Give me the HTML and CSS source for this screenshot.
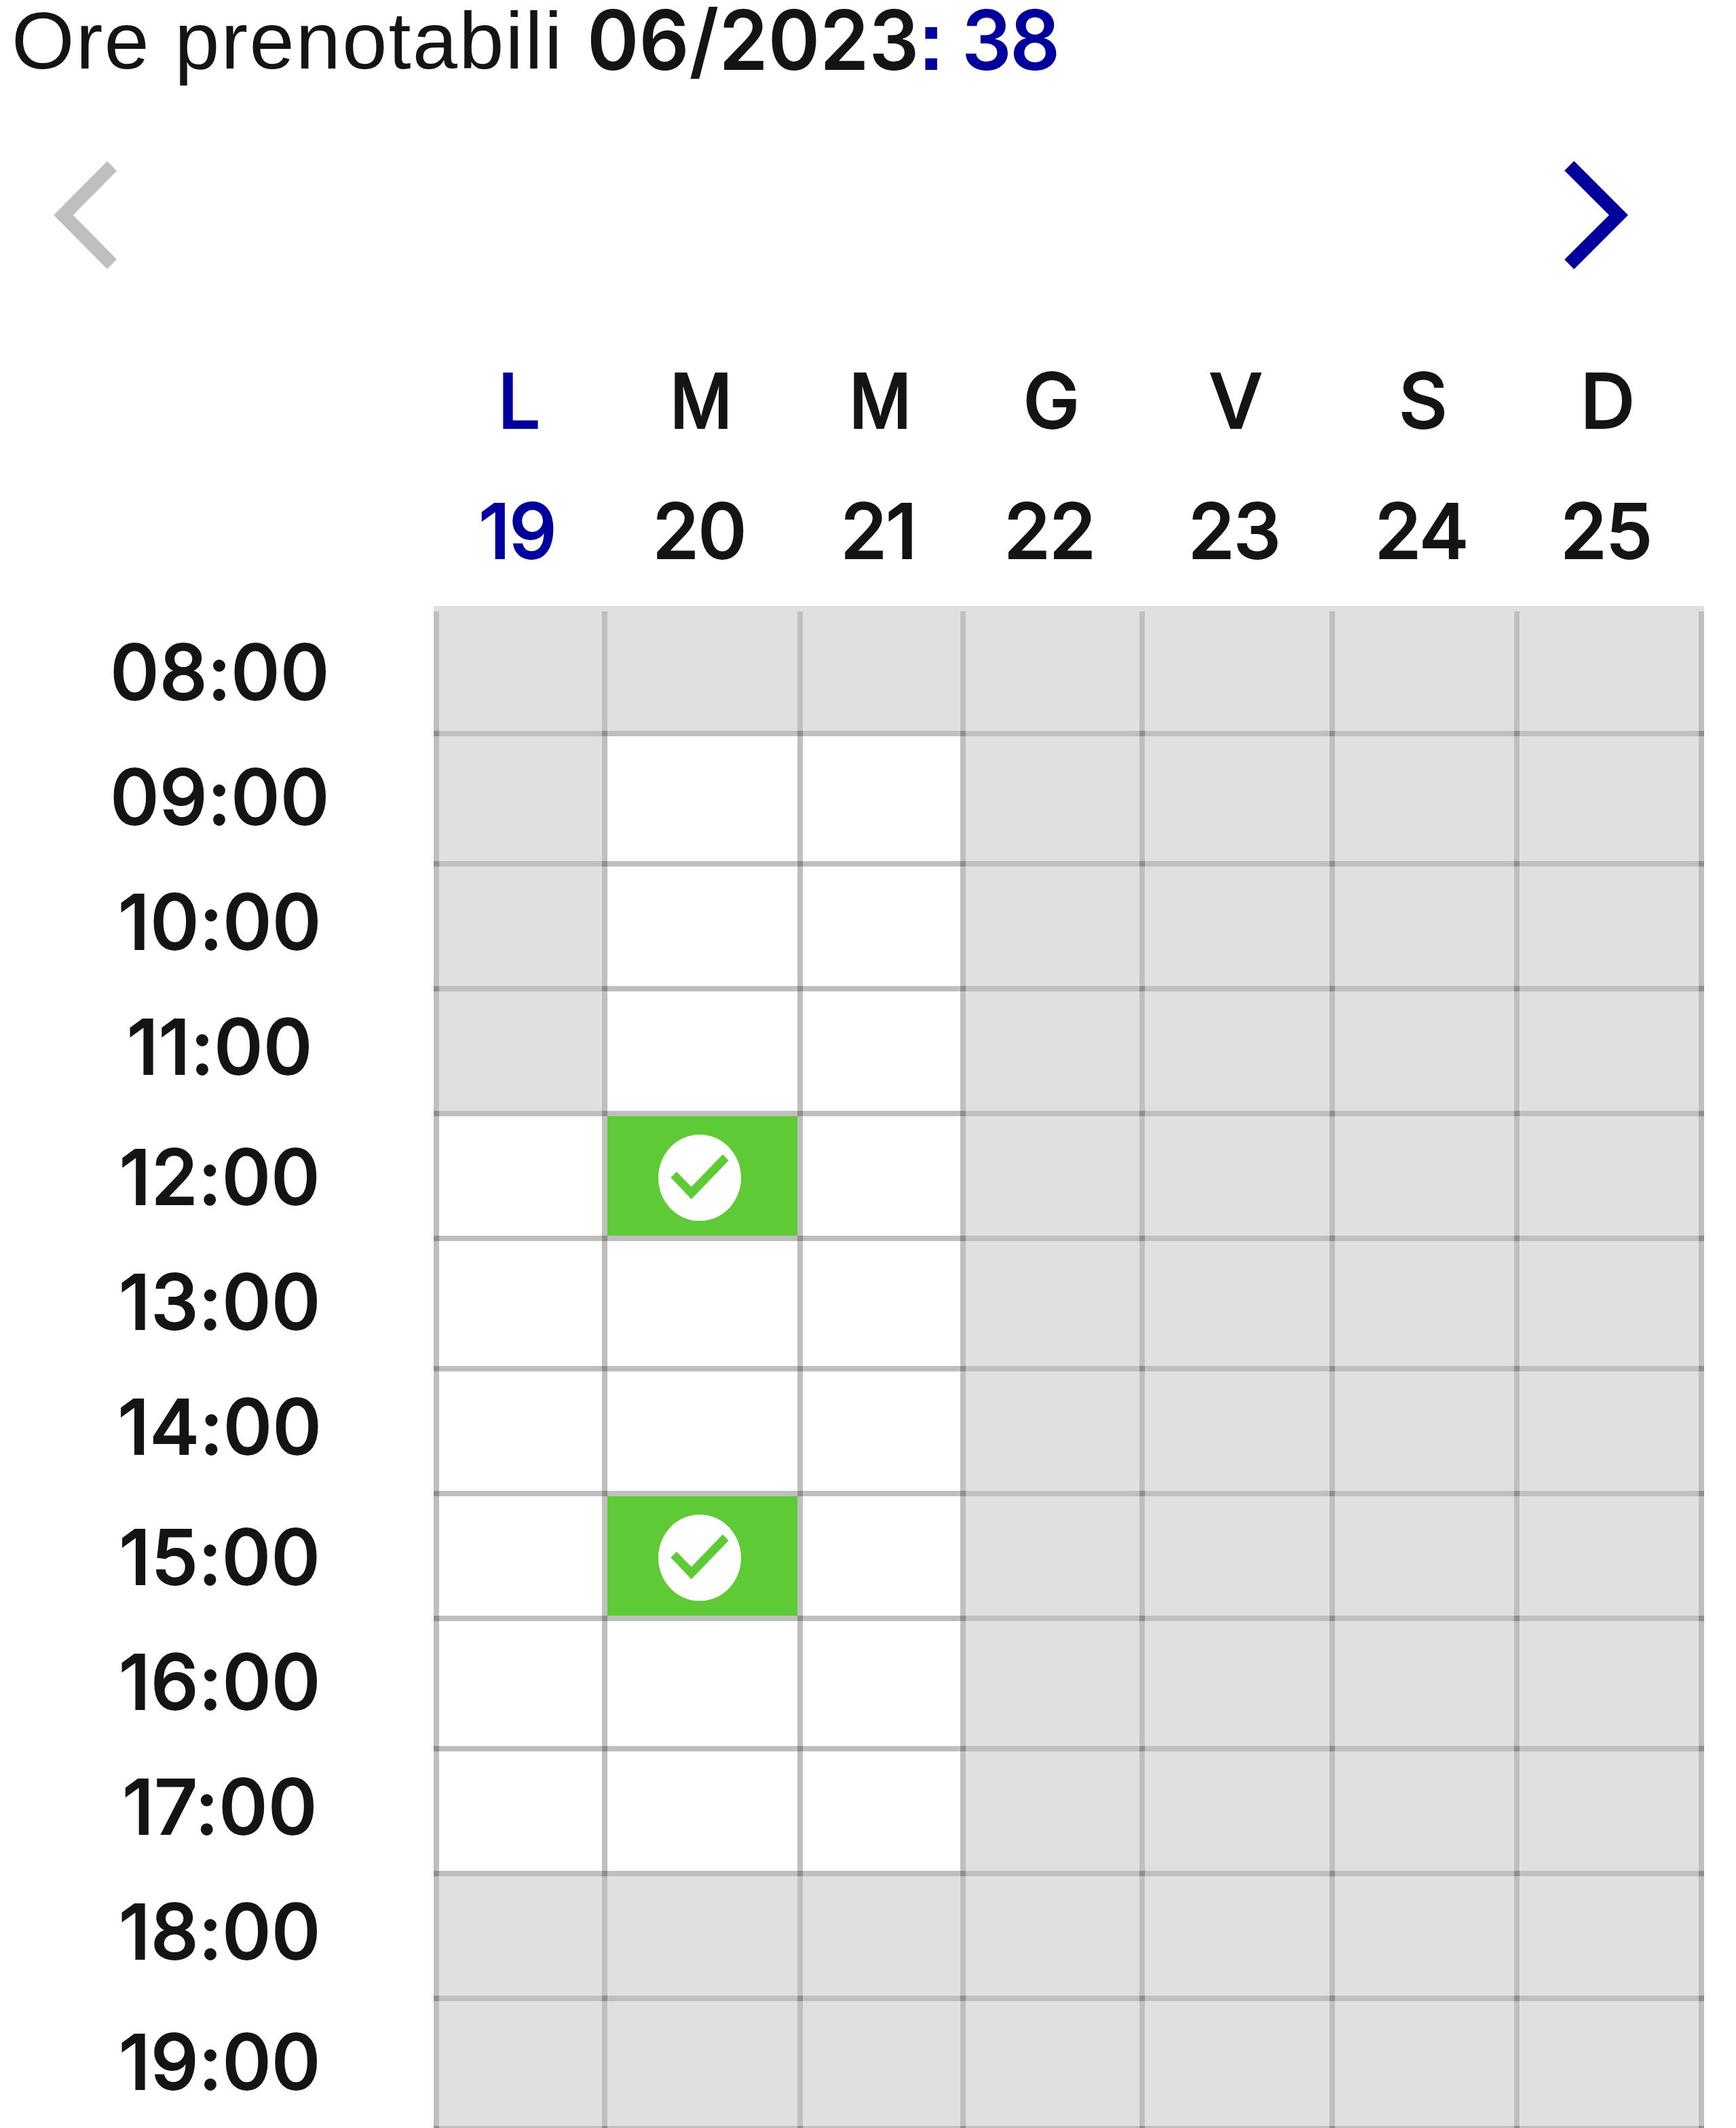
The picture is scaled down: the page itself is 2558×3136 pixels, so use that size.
FILE: index.html
```html
<!DOCTYPE html>
<html lang="it">
<head>
<meta charset="utf-8">
<title>Ore prenotabili</title>
<link rel="stylesheet" href="styles.css">
</head>
<body>
<svg class="defs" aria-hidden="true">
  <symbol id="check" viewBox="0 0 122 127.4">
    <ellipse cx="61" cy="63.7" rx="61" ry="63.7" fill="#fff"/>
    <path d="M18.3 63.3 27 54.7 48.7 77 95 29.3 103.7 38.3 48.7 95.3Z" fill="#5eca36"/>
  </symbol>
</svg>
<main class="page">
  <h1 class="title"><span class="title-text">Ore prenotabili</span><span class="month">06/2023</span><span class="colon">:</span><span class="hours">38</span></h1>
  <nav class="nav">
    <svg class="arrow" width="94" height="160" viewBox="0 0 94 160"><path d="M0 80 79 .5 93 15 28.7 80 93 145 79 159.5Z" fill="#bfbfbf"/></svg>
    <svg class="arrow" width="94" height="160" viewBox="0 0 94 160"><path d="M94 80 14.3 .2 .3 14.4 66 80 .3 145.6 14.3 159.8Z" fill="#00009c"/></svg>
  </nav>
  <div class="days names">
    <span class="today">L</span><span class="wide">M</span><span class="wide">M</span><span>G</span><span>V</span><span>S</span><span>D</span>
  </div>
  <div class="days numbers">
    <span class="today">19</span><span>20</span><span>21</span><span>22</span><span>23</span><span>24</span><span>25</span>
  </div>
  <section class="schedule">
    <div class="times">
      <span>08:00</span><span>09:00</span><span>10:00</span><span class="tall">11:00</span><span>12:00</span><span>13:00</span><span class="tall">14:00</span><span>15:00</span><span>16:00</span><span>17:00</span><span class="tall">18:00</span><span class="last">19:00</span>
    </div>
    <div class="slots">
      <div class="row"><div class="c off"></div><div class="c off"></div><div class="c off"></div><div class="c off"></div><div class="c off"></div><div class="c off"></div><div class="c off"></div><div class="c"></div></div>
      <div class="row tall"><div class="c off"></div><div class="c"></div><div class="c"></div><div class="c off"></div><div class="c off"></div><div class="c off"></div><div class="c off"></div><div class="c"></div></div>
      <div class="row"><div class="c off"></div><div class="c"></div><div class="c"></div><div class="c off"></div><div class="c off"></div><div class="c off"></div><div class="c off"></div><div class="c"></div></div>
      <div class="row"><div class="c off"></div><div class="c"></div><div class="c"></div><div class="c off"></div><div class="c off"></div><div class="c off"></div><div class="c off"></div><div class="c"></div></div>
      <div class="row"><div class="c"></div><div class="c on"><svg class="check"><use href="#check"/></svg></div><div class="c"></div><div class="c off"></div><div class="c off"></div><div class="c off"></div><div class="c off"></div><div class="c"></div></div>
      <div class="row tall"><div class="c"></div><div class="c"></div><div class="c"></div><div class="c off"></div><div class="c off"></div><div class="c off"></div><div class="c off"></div><div class="c"></div></div>
      <div class="row"><div class="c"></div><div class="c"></div><div class="c"></div><div class="c off"></div><div class="c off"></div><div class="c off"></div><div class="c off"></div><div class="c"></div></div>
      <div class="row"><div class="c"></div><div class="c on"><svg class="check"><use href="#check"/></svg></div><div class="c"></div><div class="c off"></div><div class="c off"></div><div class="c off"></div><div class="c off"></div><div class="c"></div></div>
      <div class="row tall"><div class="c"></div><div class="c"></div><div class="c"></div><div class="c off"></div><div class="c off"></div><div class="c off"></div><div class="c off"></div><div class="c"></div></div>
      <div class="row"><div class="c"></div><div class="c"></div><div class="c"></div><div class="c off"></div><div class="c off"></div><div class="c off"></div><div class="c off"></div><div class="c"></div></div>
      <div class="row"><div class="c off"></div><div class="c off"></div><div class="c off"></div><div class="c off"></div><div class="c off"></div><div class="c off"></div><div class="c off"></div><div class="c"></div></div>
      <div class="row last"><div class="c off"></div><div class="c off"></div><div class="c off"></div><div class="c off"></div><div class="c off"></div><div class="c off"></div><div class="c off"></div><div class="c"></div></div>
    </div>
  </section>
</main>
</body>
</html>
```
FILE: styles.css
```css
* { box-sizing: border-box; }

body {
  margin: 0;
  background: #fff;
  color: #141414;
  font-family: Inter, "Liberation Sans", sans-serif;
  font-feature-settings: "calt" 0;
}

.defs { display: none; }

.page {
  width: 2558px;
  height: 3136px;
}

.title {
  display: flex;
  align-items: baseline;
  margin: 0;
  padding-left: 17px;
  height: 113px;
  line-height: 113px;
  font-weight: 400;
  white-space: pre;
}

.title-text {
  font-family: "Liberation Sans", sans-serif;
  font-size: 119px;
  letter-spacing: 2.2px;
}

.month,
.hours {
  font-size: 122px;
  font-weight: 600;
  transform: translateY(2px) scaleX(.95);
  transform-origin: left;
}

.month { margin-left: 34px; }

.colon {
  margin-left: -28px;
  font-family: "Liberation Sans", sans-serif;
  font-size: 124px;
  font-weight: 700;
  transform: translateY(2px);
}

.colon,
.hours,
.today { color: #00009c; }

.hours {
  margin-left: 24px;
  letter-spacing: -3px;
}

.nav {
  display: flex;
  justify-content: space-between;
  height: 381px;
  padding: 124px 159px 0 79px;
}

.arrow { display: block; }

.days {
  display: grid;
  grid-template-columns: 248px 288px 240px 264px 280px 272px 272px;
  padding-left: 639px;
  height: 192px;
  line-height: 192px;
  font-size: 112px;
  font-weight: 500;
  text-align: center;
  -webkit-text-stroke: 1.8px currentColor;
}

.names { padding-left: 641px; }

.numbers {
  padding-left: 638px;
  letter-spacing: -2px;
}

.wide { transform: scaleX(.9); }

.schedule {
  display: flex;
  margin-top: 15px;
}

.times {
  display: flex;
  flex-direction: column;
  width: 639px;
  padding: 5px 0 0 9px;
  font-size: 112px;
  font-weight: 500;
  letter-spacing: .4px;
  line-height: 184px;
  text-align: center;
  -webkit-text-stroke: 1.8px currentColor;
}

.times span { flex: none; height: 184px; }
.times .tall { height: 192px; }
.times .last { height: 182px; }

.slots {
  width: 1872px;
  border-top: 8px solid #e0e0e0;
}

.row {
  display: grid;
  grid-template-columns: 248px 288px 240px 264px 280px 272px 272px 8px;
  height: 184px;
  border-bottom: 8px solid #bfbfbf;
}

.row.tall { height: 192px; }

.row.last {
  height: 187px;
  border-bottom-width: 3px;
}

.c {
  position: relative;
  border-left: 8px solid #bfbfbf;
}

/* darker square where two grid lines cross */
.c::after {
  content: "";
  position: absolute;
  left: -8px;
  top: 100%;
  width: 8px;
  height: 8px;
  background: #8f8f8f;
}

.last .c::after { height: 3px; }

.off { background: #e0e0e0; }

.on {
  padding: 27px 0 0 75px;
  background: #5eca36;
}

.check {
  display: block;
  width: 122px;
  height: 127.4px;
}
```
